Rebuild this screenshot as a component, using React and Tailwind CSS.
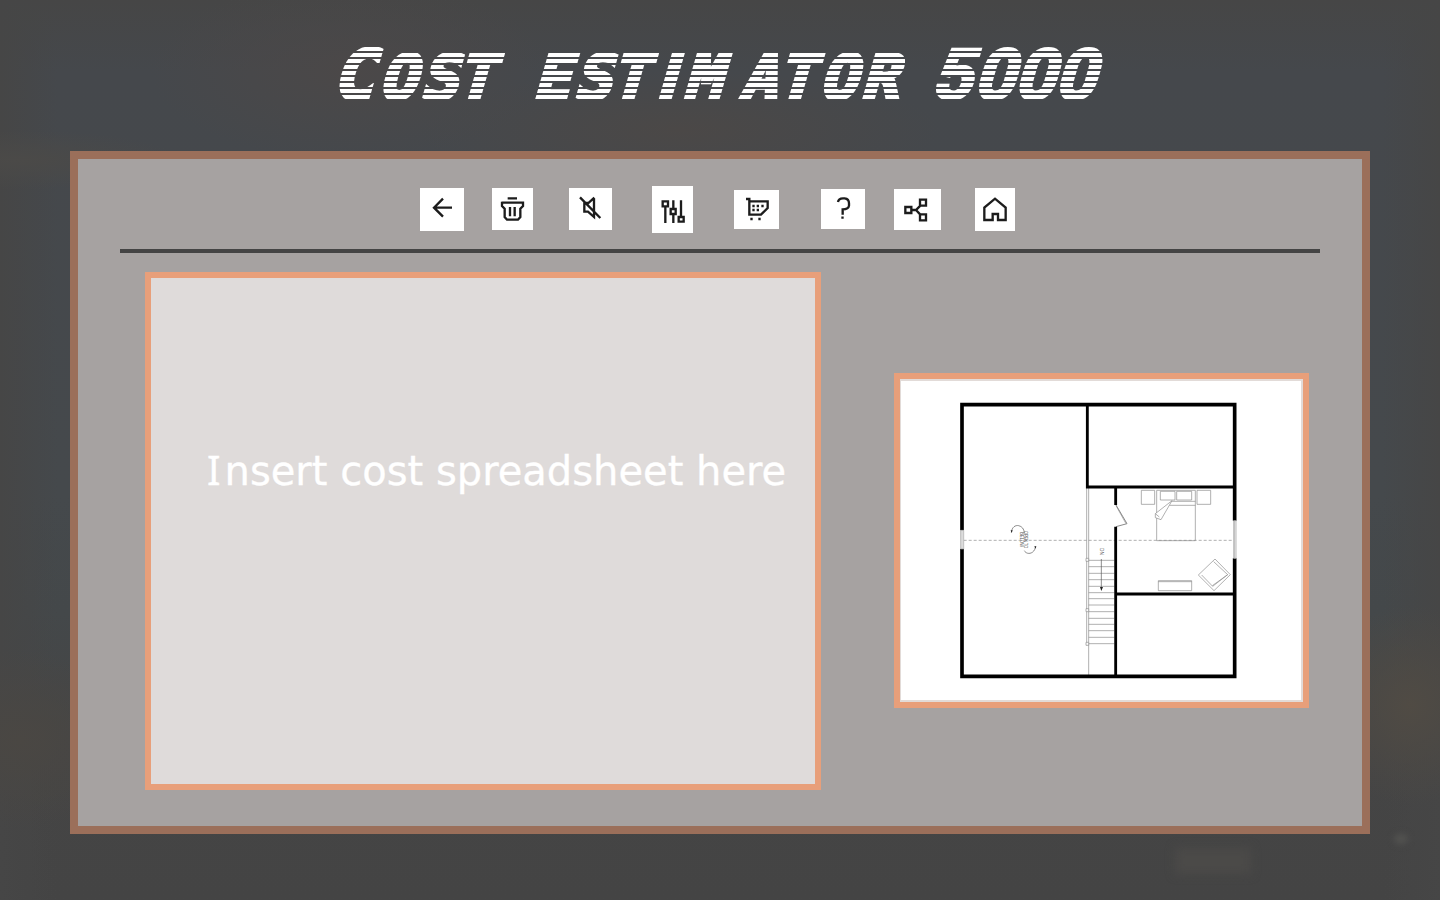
import React from "react";

const MONO = "'DejaVu Sans Mono', monospace";
const ROB = "Roboto, sans-serif";

// Each glyph of the wordmark: character, left edge of its foot, font, size
const glyphs = [
  ["C", 331, MONO, 69],
  ["O", 378, MONO, 62],
  ["S", 419.5, MONO, 62],
  ["T", 455.5, MONO, 62],
  ["E", 532, MONO, 62],
  ["S", 573, MONO, 62],
  ["T", 609.5, MONO, 62],
  ["I", 656, ROB, 63],
  ["M", 683, MONO, 62],
  ["A", 739, MONO, 62],
  ["T", 776, MONO, 62],
  ["O", 818.5, MONO, 62],
  ["R", 860, MONO, 62],
  ["5", 930.5, ROB, 70],
  ["0", 973, ROB, 70],
  ["0", 1013.5, ROB, 70],
  ["0", 1054, ROB, 70],
];
const words = [glyphs.slice(0, 4), glyphs.slice(4, 13), glyphs.slice(13)];

function Wordmark() {
  const stripes = Array.from({ length: 9 }, (_, i) => 47 + i * 6);
  return (
    <svg className="block h-[151px] w-full shrink-0" viewBox="0 0 1440 151" role="heading">
      <defs>
        <mask id="stripes" maskUnits="userSpaceOnUse" x="300" y="30" width="840" height="90">
          {stripes.map((y) => (
            <rect key={y} x="300" y={y} width="840" height="4" fill="#fff" />
          ))}
        </mask>
      </defs>
      <g mask="url(#stripes)">
        {words.map((word, w) => (
          <text
            key={w}
            x={word.map((g) => g[1]).join(" ")}
            y="0"
            transform="translate(0 98.5) skewX(-16)"
            fill="#fff"
            stroke="#fff"
            strokeWidth={w === 2 ? 3 : 3.6}
          >
            {word.map((g, i) => (
              <tspan key={i} fontFamily={g[2]} fontSize={g[3]} fontWeight="700">
                {g[0]}
              </tspan>
            ))}
          </text>
        ))}
      </g>
    </svg>
  );
}

function Tile({ className, box, children }) {
  return (
    <button className={"shrink-0 bg-white " + className}>
      <svg
        className="block h-full w-full"
        viewBox={box}
        preserveAspectRatio="none"
        fill="none"
        stroke="#1c1c1c"
        strokeWidth="7"
      >
        {children}
      </svg>
    </button>
  );
}

function Toolbar() {
  return (
    <div className="flex h-[90px] items-start pl-[342px]">
      <Tile className="mt-[29px] h-[43px] w-[44px]" box="30 39 132 129">
        <path d="M126 98H72M99 71L72 98L99 125" />
      </Tile>
      <Tile className="mt-[29px] ml-[28px] h-[42px] w-[41px]" box="246 39 123 126">
        <path d="M293 70H321M275 83H339V93L331 101V126L324 134H291L284 126V101L276 93V80M300 96V124M314 96V124" />
      </Tile>
      <Tile className="mt-[29px] ml-[36px] h-[42px] w-[43px]" box="477 39 129 126">
        <path d="M510 67L571 129M552 70V126L534 110H523V84H535L553 68" />
      </Tile>
      <Tile className="mt-[27px] ml-[40px] h-[47px] w-[41px]" box="726 33 123 141">
        <path d="M766 94V144M790 76V102M790 118V144M813 76V126M758 79H774V94H758ZM782 102H797V117H782ZM806 126H821V140H806Z" />
      </Tile>
      <Tile className="mt-[31px] ml-[41px] h-[39px] w-[45px]" box="102 44 135 117">
        <path d="M138 71H148V118H183L203 98V78H148" />
        <path d="M157 92H164M170 92H177M184 92H191M157 104H164M170 104H177M151 131H158M175 131H182" />
      </Tile>
      <Tile className="mt-[30px] ml-[42px] h-[40px] w-[44px]" box="363 41 132 120">
        <path d="M414 80C415 72 421 69 429 69H434C443 70 447 76 447 84V91C446 99 438 102 428 102V118M424 127H431" />
      </Tile>
      <Tile className="mt-[30px] ml-[29px] h-[41px] w-[47px]" box="582 41 141 123">
        <path d="M616 95H634V113H616ZM660 73H678V91H660ZM660 117H678V135H660ZM634 104H648L661 91M648 104L661 118" />
      </Tile>
      <Tile className="mt-[29px] ml-[34px] h-[43px] w-[40px]" box="825 39 120 129">
        <path d="M853 135V98L885 71L917 98V135H894V117H878V135Z" />
      </Tile>
    </div>
  );
}

const steps = [586, 605, 625, 644, 664, 683, 701, 720, 740, 760, 778, 797, 817, 836];

function FloorPlan() {
  return (
    <svg className="block h-full w-full bg-white" viewBox="33 48 1200 957" preserveAspectRatio="none" fill="none">
      {/* furniture, stairs and annotations */}
      <g stroke="#8a8a8a" strokeWidth="2">
        <path d="M221 526H1030" strokeDasharray="9 6" />
        <path d="M590 369V838M596 369V930" />
        {steps.map((y) => (
          <path key={y} d={`M596 ${y}H673`} />
        ))}
        <path d="M588 580H596V589H588ZM588 731H596V740H588ZM588 832H596V841H588Z" fill="#fff" />
        <path d="M754 376H794V418H754ZM921 376H962V418H921Z" />
        <path d="M800 376H916V527H800ZM811 379H855V405H811ZM860 379H905V405H860ZM846 409H916M838 421H916" />
        <path d="M846 407L796 446V458L813 464L846 407M796 446L808 456" fill="#fff" />
        <path d="M805 647H905V677H805Z M805 650H905" />
        <path d="M975 582L1021 629L972 677L925 630ZM971 590L1013 629L968 664L935 630M1013 629L967 662" />
        <path d="M678 420L711 476L678 485" strokeWidth="3" />
        <path d="M678 422L708 476" />
      </g>
      <g stroke="#555" strokeWidth="2">
        <path d="M634 582V668" />
        <path d="M364 502C366 486 376 480 386 482C396 484 402 492 403 503M403 557C407 565 418 568 427 562C434 557 436 550 436 544" />
      </g>
      <path d="M630 666H639L634 678ZM362 496H368L365 504ZM433 544H439L437 551Z" fill="#222" />
      <g fill="#555" fontFamily="Liberation Sans, sans-serif">
        <text transform="translate(629 549) rotate(90)" fontSize="17" textLength="21" lengthAdjust="spacingAndGlyphs">DN</text>
        <text transform="translate(402 498) rotate(90)" fontSize="14" textLength="52" lengthAdjust="spacingAndGlyphs">OPEN TO</text>
        <text transform="translate(391 502) rotate(90)" fontSize="14" textLength="44" lengthAdjust="spacingAndGlyphs">BELOW</text>
      </g>
      {/* walls */}
      <g stroke="#000">
        <path d="M216 496V119H1034V467M1034 580V934H216V552" strokeWidth="11" />
        <path d="M592 119V366H1034M677 366V420M677 485V934M677 687H1034" strokeWidth="8.5" />
      </g>
      {/* windows */}
      <path d="M212 496H221V552H212ZM216 496V552M1031 467H1038V580H1031ZM1034 467V580" fill="#fff" stroke="#999" strokeWidth="2" />
    </svg>
  );
}

export default function App() {
  return (
    <div className="relative h-[900px] w-[1440px] overflow-hidden bg-[#454545]">
      {/* dimmed, out-of-focus landscape */}
      <div className="absolute inset-0">
        <div className="h-full w-full bg-[radial-gradient(ellipse_200px_90px_at_350px_70px,#4b4848,transparent),radial-gradient(ellipse_260px_60px_at_680px_130px,#4b4847,transparent),radial-gradient(ellipse_160px_30px_at_20px_160px,#4b4a48,transparent),radial-gradient(ellipse_90px_100px_at_1410px_705px,#504b44,transparent),radial-gradient(ellipse_110px_90px_at_20px_740px,#4a4743,transparent),linear-gradient(90deg,#464646,transparent_4%,transparent_96%,#464646),linear-gradient(180deg,#464646,#45484c_8%,#45494c_55%,#44484a_68%,#454545_82%,#444444)]" />
      </div>
      <div className="absolute top-[848px] left-[1175px] h-[26px] w-[76px] bg-[#4b4a48] blur-[5px]" />
      <div className="absolute top-[834px] left-[1394px] h-[10px] w-[14px] rounded-full bg-[#525250] blur-[3px]" />

      <main className="relative flex h-full flex-col">
        <Wordmark />
        <section className="mx-[70px] h-[683px] border-8 border-[#9b6f5a] bg-[#a6a2a1]">
          <Toolbar />
          <div className="mx-[42px] h-1 bg-[#444444]" />
          <div className="flex items-start pt-[19px] pl-[67px]">
            <div className="h-[518px] w-[676px] shrink-0 border-6 border-[#e89f7a] bg-[#dfdbda] pt-[162px] pl-[56px]">
              <p className="w-[590px] text-[40px] leading-[60px] whitespace-nowrap text-white [font-family:'DejaVu_Sans',sans-serif] [-webkit-text-stroke:0.3px_white]">
                <span className="tracking-[4px] [font-family:'Noto_Sans',sans-serif]">I</span>nsert cost spreadsheet here
              </p>
            </div>
            <div className="mt-[101px] ml-[73px] h-[335px] w-[415px] shrink-0 border-6 border-[#e89f7a] bg-[#e2dbd8] pt-[2px] pr-[2px] pb-[2px] pl-px">
              <FloorPlan />
            </div>
          </div>
        </section>
      </main>
    </div>
  );
}
